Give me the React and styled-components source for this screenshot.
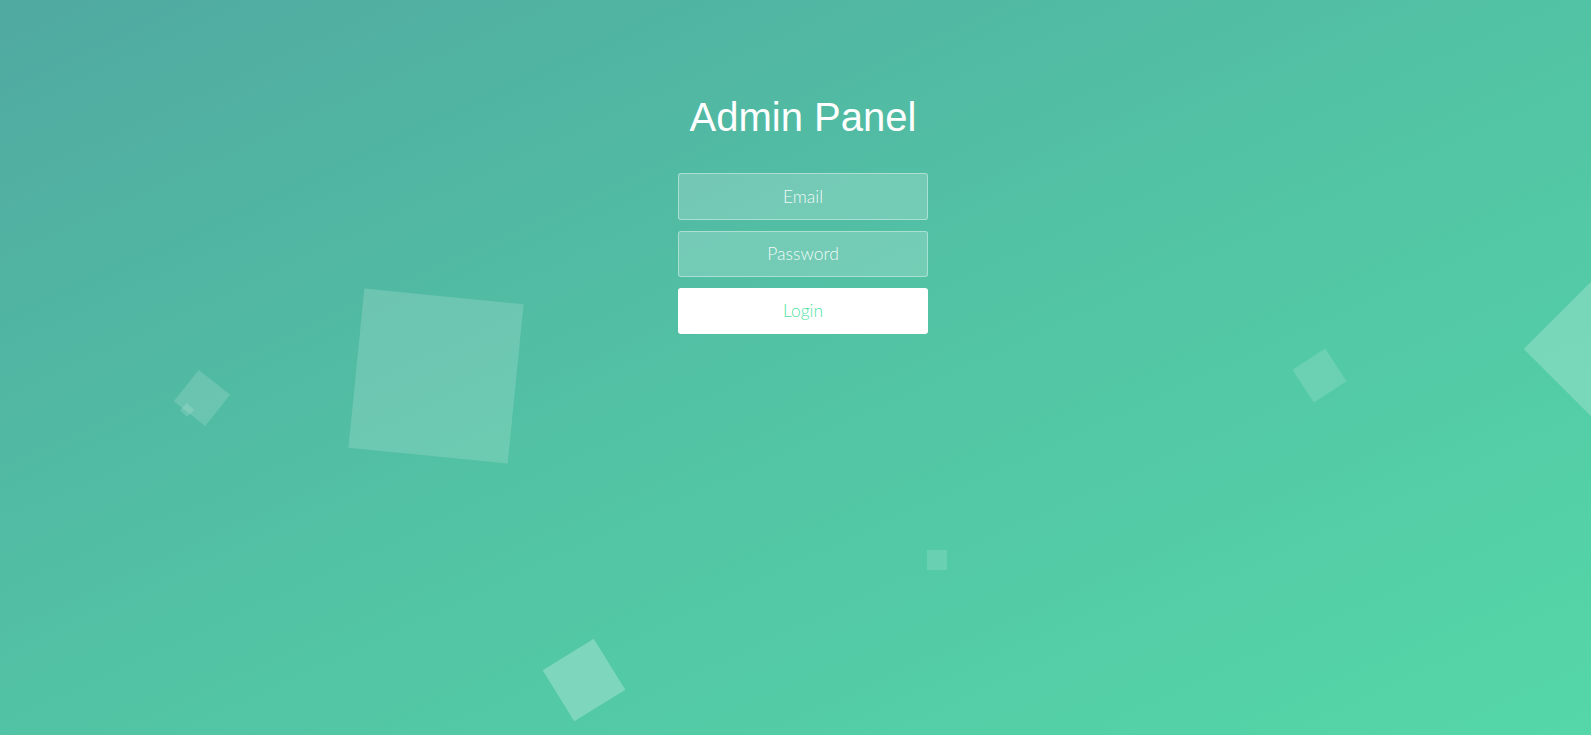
import React from "react";
import styled, { createGlobalStyle } from "styled-components";

const GlobalStyle = createGlobalStyle`
  html, body {
    margin: 0;
    padding: 0;
    height: 100%;
    overflow: hidden;
  }
  body {
    font-family: "Lato", "Liberation Sans", sans-serif;
  }
  * { box-sizing: border-box; }
`;

const Wrapper = styled.div`
  position: relative;
  width: 100%;
  height: 100vh;
  overflow: hidden;
  background: linear-gradient(to bottom right, #50a9a1 0%, #52c3a4 50%, #55d7a8 100%);
`;

const Container = styled.div`
  position: relative;
  z-index: 2;
  display: flex;
  flex-direction: column;
  align-items: center;
  padding: 94px 0 0 15px;
`;

const Title = styled.h1`
  margin: 0;
  font-family: "Liberation Sans", Arial, sans-serif;
  font-size: 40px;
  line-height: 46px;
  font-weight: 400;
  color: #ffffff;
`;

const Form = styled.form`
  display: flex;
  flex-direction: column;
  align-items: center;
  gap: 11px;
  margin-top: 33px;
`;

const Input = styled.input`
  width: 250px;
  height: 46.5px;
  padding: 0 15px;
  border: 1px solid rgba(255, 255, 255, 0.4);
  border-radius: 3px;
  background: rgba(255, 255, 255, 0.2);
  color: #ffffff;
  font-family: "Lato", "Open Sans", sans-serif;
  font-weight: 300;
  font-size: 17.5px;
  text-align: center;
  outline: none;
  &::placeholder {
    color: rgba(255, 255, 255, 0.92);
    opacity: 1;
  }
`;

const Button = styled.button`
  width: 250px;
  height: 45.5px;
  padding: 0 15px;
  border: 0;
  border-radius: 3px;
  background: #ffffff;
  color: #53e3a6;
  font-family: "Lato", "Open Sans", sans-serif;
  font-weight: 300;
  font-size: 17.5px;
  cursor: pointer;
`;

const Bubble = styled.div`
  position: absolute;
  left: ${(p) => p.$x - p.$s / 2}px;
  top: ${(p) => p.$y - p.$s / 2}px;
  width: ${(p) => p.$s}px;
  height: ${(p) => p.$s}px;
  transform: rotate(${(p) => p.$r}deg);
  background: rgba(255, 255, 255, ${(p) => p.$a});
  z-index: 1;
`;

const bubbles = [
  { x: 435.9, y: 375.9, s: 160, r: 5.7, a: 0.16 },
  { x: 202.1, y: 398.4, s: 40, r: 38.5, a: 0.15 },
  { x: 187, y: 410, s: 10, r: 45, a: 0.15 },
  { x: 1319.9, y: 375.5, s: 39, r: 57, a: 0.14 },
  { x: 1637.4, y: 349.3, s: 160, r: 45, a: 0.22 },
  { x: 584, y: 679.7, s: 60, r: 58.3, a: 0.25 },
  { x: 937, y: 559.7, s: 20, r: 0, a: 0.13 },
];

export default function App() {
  return (
    <>
      <GlobalStyle />
      <Wrapper>
        {bubbles.map((b, i) => (
          <Bubble key={i} $x={b.x} $y={b.y} $s={b.s} $r={b.r} $a={b.a} />
        ))}
        <Container>
          <Title>Admin Panel</Title>
          <Form onSubmit={(e) => e.preventDefault()}>
            <Input type="text" placeholder="Email" />
            <Input type="password" placeholder="Password" />
            <Button type="submit">Login</Button>
          </Form>
        </Container>
      </Wrapper>
    </>
  );
}
